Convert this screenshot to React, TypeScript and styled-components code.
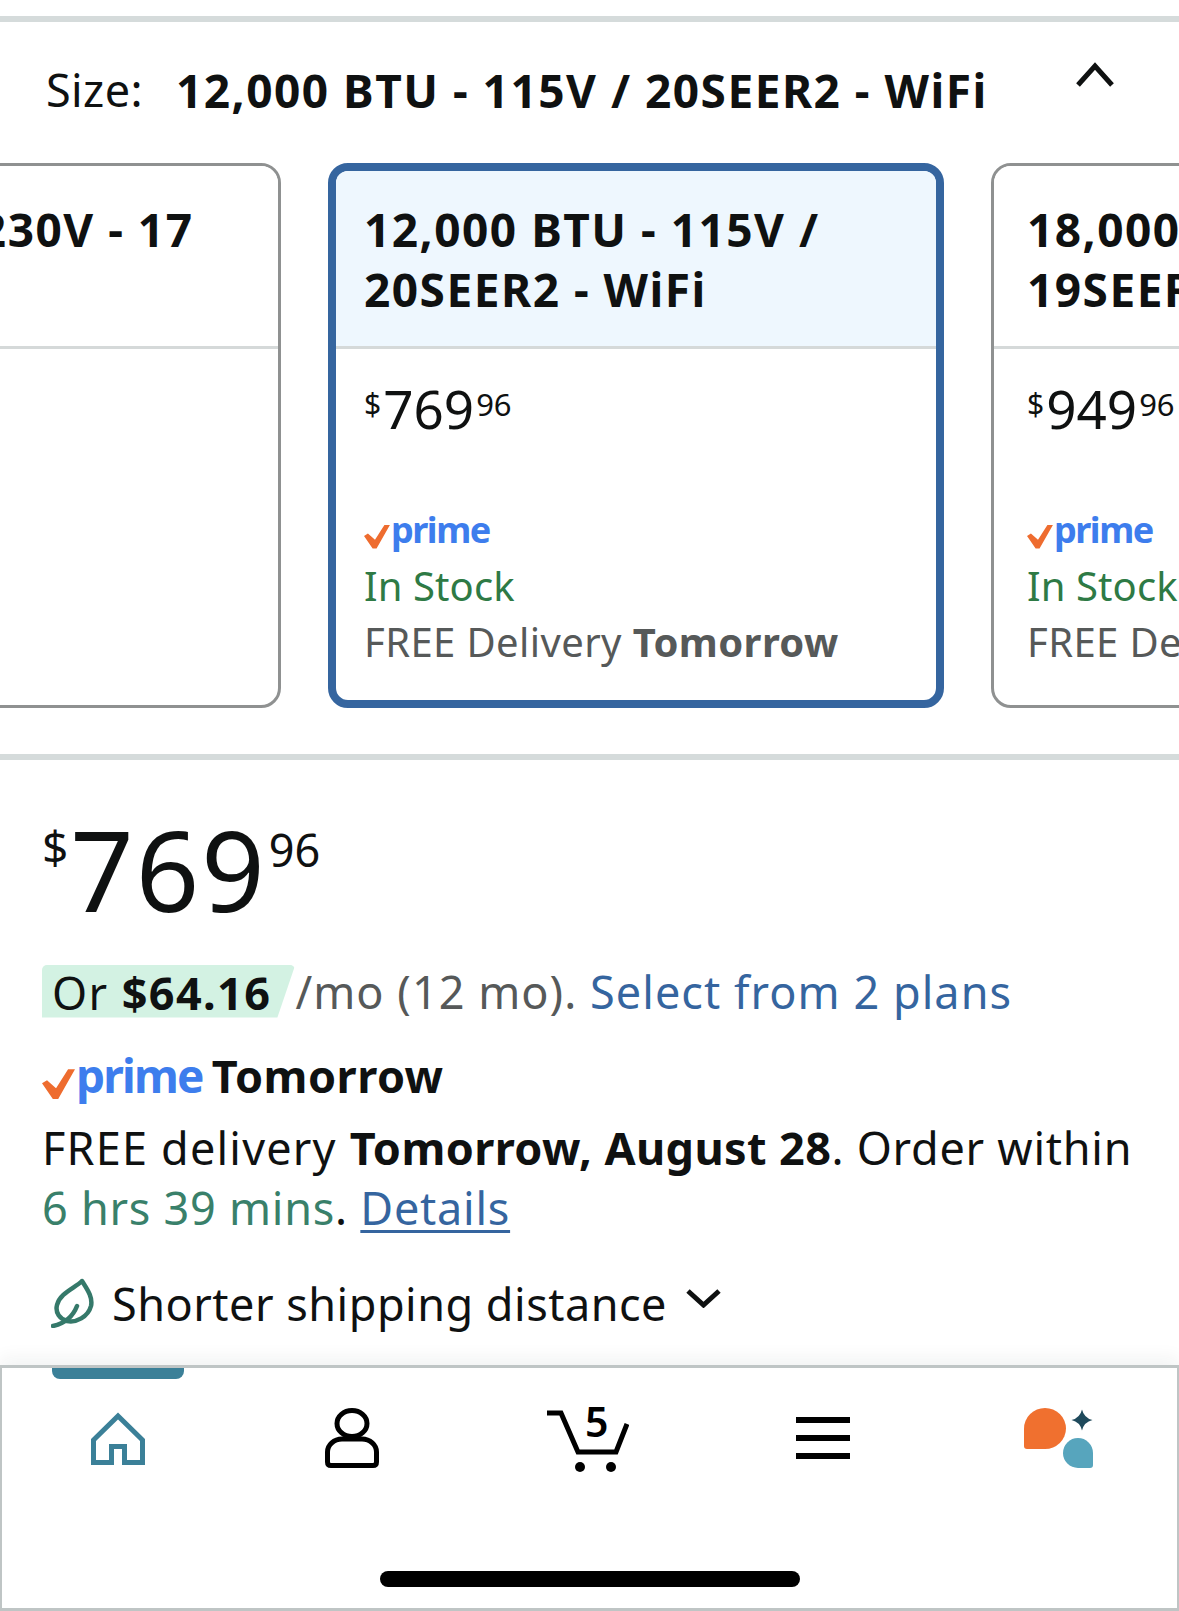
import React from "react";
import styled, { createGlobalStyle } from "styled-components";

const GlobalStyle = createGlobalStyle`
  html, body {
    margin: 0;
    padding: 0;
    background: #fff;
  }
  body {
    font-family: "Noto Sans", "Liberation Sans", sans-serif;
    color: #0f1111;
  }
  * {
    box-sizing: border-box;
  }
`;

const Page = styled.div`
  width: 1179px;
  height: 1611px;
  display: flex;
  flex-direction: column;
  overflow: hidden;
  background: #fff;
`;

const Main = styled.div`
  flex: 1;
  padding-top: 16px;
`;

const Rule = styled.div`
  height: 6px;
  background: #d5dbdb;
`;

const SizeHeader = styled.div`
  display: flex;
  align-items: flex-start;
  height: 141px;
  padding: 38px 64px 0 46px;
`;

const SizeLabel = styled.div`
  font-size: 45px;
  line-height: 60px;
  letter-spacing: 0.4px;
  margin-right: 33px;
`;

const SizeValue = styled.div`
  font-size: 46px;
  line-height: 60px;
  font-weight: 700;
  letter-spacing: 1.5px;
  white-space: nowrap;
`;

const Chevron = styled.svg`
  margin-left: auto;
  margin-top: 1px;
  flex: none;
`;

const CardRow = styled.div`
  display: flex;
  gap: 47px;
  margin-left: -335px;
  width: 2000px;
`;

const Card = styled.div<{ $selected?: boolean }>`
  width: 616px;
  height: 545px;
  flex: none;
  border-radius: 20px;
  overflow: hidden;
  border: ${(p) => (p.$selected ? "8px solid #35659f" : "3px solid #8f9191")};
`;

const CardHead = styled.div<{ $selected?: boolean }>`
  height: ${(p) => (p.$selected ? "178px" : "183px")};
  padding: ${(p) => (p.$selected ? "28px 28px 0" : "33px 33px 0")};
  background: ${(p) => (p.$selected ? "#eef7fe" : "#fff")};
  border-bottom: 3px solid #d5d9d9;
  font-size: 46px;
  line-height: 60px;
  font-weight: 700;
  letter-spacing: 1.5px;
`;

const CardBody = styled.div<{ $selected?: boolean }>`
  padding: ${(p) => (p.$selected ? "29px 28px 0" : "29px 33px 0")};
`;

const PriceSmall = styled.div`
  display: flex;
  align-items: flex-start;
  height: 62px;
`;

const Super = styled.span<{ $size: number; $line: number; $top: number }>`
  font-size: ${(p) => p.$size}px;
  line-height: ${(p) => p.$line}px;
  margin-top: ${(p) => p.$top}px;
`;

const PriceWhole = styled.span<{ $size: number; $line: number; $track: number }>`
  font-size: ${(p) => p.$size}px;
  line-height: ${(p) => p.$line}px;
  letter-spacing: ${(p) => p.$track}px;
  margin: 0 2px;
`;

const PrimeLine = styled.div`
  margin-top: 70px;
  height: 40px;
  display: flex;
  align-items: center;
`;

const PrimeMark = styled.span<{ $size: number }>`
  display: inline-flex;
  align-items: center;
  color: #3d7ded;
  font-weight: 700;
  font-size: ${(p) => p.$size}px;
  line-height: 1;
  letter-spacing: ${(p) => -p.$size * 0.04}px;
  flex: none;
`;

const CheckIcon = styled.svg<{ $shift: number }>`
  flex: none;
  margin-top: ${(p) => p.$shift}px;
  margin-right: 1px;
`;

const Stock = styled.div`
  color: #2e7a45;
  font-size: 40px;
  line-height: 56px;
  letter-spacing: 0.1px;
  margin-top: 8px;
`;

const Delivery = styled.div`
  color: #565959;
  font-size: 40px;
  line-height: 56px;
  letter-spacing: 0.4px;
  white-space: nowrap;
  b {
    font-weight: 700;
  }
`;

const SecondRule = styled(Rule)`
  margin-top: 46px;
`;

const Summary = styled.div`
  padding: 44px 42px 0;
`;

const PriceBig = styled.div`
  display: flex;
  align-items: flex-start;
  height: 130px;
`;

const PlanLine = styled.div`
  display: flex;
  align-items: center;
  margin-top: 30px;
  height: 54px;
  font-size: 45px;
  letter-spacing: 1.05px;
  white-space: nowrap;
`;

const PlanPill = styled.span`
  display: inline-block;
  height: 53px;
  line-height: 56px;
  padding: 0 24px 0 10px;
  background: #d3f2e3;
  border-radius: 5px 5px 0 0;
  clip-path: polygon(0 0, 100% 0, calc(100% - 18px) 100%, 0 100%);
  letter-spacing: 1.4px;
  b {
    font-weight: 700;
  }
`;

const PlanNote = styled.span`
  color: #565959;
`;

const LinkText = styled.span`
  color: #35659f;
`;

const PrimeRow = styled.div`
  display: flex;
  align-items: center;
  gap: 9px;
  margin-top: 27px;
  height: 60px;
`;

const RowTitle = styled.span`
  font-size: 45px;
  font-weight: 700;
  letter-spacing: 0.5px;
`;

const DeliveryCopy = styled.div`
  font-size: 45px;
  line-height: 60px;
  letter-spacing: 0.75px;
  margin-top: 13px;
  white-space: nowrap;
  b {
    font-weight: 700;
    letter-spacing: 0.4px;
  }
`;

const DeliveryLead = styled.span`
  letter-spacing: 1.2px;
`;

const Countdown = styled.span`
  color: #39806a;
`;

const DetailsLink = styled(LinkText)`
  text-decoration: underline;
  text-decoration-thickness: 3px;
  text-underline-offset: 5px;
`;

const ShippingRow = styled.div`
  display: flex;
  align-items: center;
  margin-top: 35px;
  padding-left: 9px;
  height: 60px;
  font-size: 45px;
  letter-spacing: 0.5px;
`;

const ShippingText = styled.span`
  margin: 0 18px 0 17px;
  white-space: nowrap;
`;

const MoreChevron = styled.svg`
  flex: none;
  margin-top: -10px;
`;

const TabBar = styled.nav`
  position: relative;
  height: 246px;
  flex: none;
  display: flex;
  flex-direction: column;
  background: #fff;
  border: solid #bfc5c5;
  border-width: 3px 2px 3px 2px;
  box-shadow: 0 -8px 16px rgba(15, 40, 40, 0.05);
`;

const TabRow = styled.div`
  display: grid;
  grid-template-columns: repeat(5, 1fr);
  height: 140px;
  margin: 0 1px 0 -2px;
`;

const Tab = styled.div`
  position: relative;
  display: flex;
  align-items: center;
  justify-content: center;
`;

const TabMarker = styled.span`
  position: absolute;
  top: 0;
  left: 50%;
  width: 132px;
  height: 11px;
  margin-left: -66px;
  background: #3b8098;
  border-radius: 0 0 8px 8px;
`;

const PersonIcon = styled.svg`
  margin-left: -2px;
`;

const CartWrap = styled.div`
  position: relative;
  width: 82px;
  height: 68px;
`;

const CartCount = styled.span`
  position: absolute;
  left: 38px;
  top: -8px;
  font-size: 41px;
  line-height: 50px;
  font-weight: 600;
  color: #000;
`;

const HomeBar = styled.div`
  width: 420px;
  height: 16px;
  margin: 63px auto 0;
  border-radius: 8px;
  background: #000;
`;

const PrimeLogo = ({ size }: { size: number }) => {
  const w = size * 0.72;
  return (
    <PrimeMark $size={size}>
      <CheckIcon $shift={size * 0.36} width={w} height={w * 0.95} viewBox="0 0 33 31">
        <path d="M0 15 L5 12 L14 20 L26 1 L33 1 L16 31 L11 31 Z" fill="#ee6c2f" />
      </CheckIcon>
      prime
    </PrimeMark>
  );
};

const Price = ({
  whole,
  cents,
  big,
}: {
  whole: string;
  cents: string;
  big?: boolean;
}) =>
  big ? (
    <PriceBig>
      <Super $size={46} $line={70} $top={7}>$</Super>
      <PriceWhole $size={111} $line={130} $track={2}>{whole}</PriceWhole>
      <Super $size={45} $line={70} $top={11}>{cents}</Super>
    </PriceBig>
  ) : (
    <PriceSmall>
      <Super $size={30} $line={40} $top={6}>$</Super>
      <PriceWhole $size={53} $line={62} $track={0}>{whole}</PriceWhole>
      <Super $size={31} $line={40} $top={6}>{cents}</Super>
    </PriceSmall>
  );

const OptionCard = ({
  title,
  price,
  selected,
}: {
  title: React.ReactNode;
  price?: [string, string];
  selected?: boolean;
}) => (
  <Card $selected={selected}>
    <CardHead $selected={selected}>{title}</CardHead>
    <CardBody $selected={selected}>
      {price && (
        <>
          <Price whole={price[0]} cents={price[1]} />
          <PrimeLine>
            <PrimeLogo size={36} />
          </PrimeLine>
          <Stock>In Stock</Stock>
          <Delivery>
            FREE Delivery <b>Tomorrow</b>
          </Delivery>
        </>
      )}
    </CardBody>
  </Card>
);

export default function App() {
  return (
    <Page>
      <GlobalStyle />
      <Main>
        <Rule />
        <SizeHeader>
          <SizeLabel>Size:</SizeLabel>
          <SizeValue>12,000 BTU - 115V / 20SEER2 - WiFi</SizeValue>
          <Chevron width="40" height="26" viewBox="0 0 40 26" fill="none">
            <path d="M3 24 L20 5 L37 24" stroke="#0f1111" strokeWidth="5" />
          </Chevron>
        </SizeHeader>
        <CardRow>
          <OptionCard title="9,000 BTU - 230V - 17 SEER2" />
          <OptionCard
            selected
            title={
              <>
                12,000 BTU - 115V /<br />
                20SEER2 - WiFi
              </>
            }
            price={["769", "96"]}
          />
          <OptionCard
            title={
              <>
                18,000 BTU - 230V /<br />
                19SEER2 - WiFi
              </>
            }
            price={["949", "96"]}
          />
        </CardRow>
        <SecondRule />
        <Summary>
          <Price big whole="769" cents="96" />
          <PlanLine>
            <PlanPill>
              Or <b>$64.16</b>
            </PlanPill>
            <PlanNote>/mo (12 mo).&nbsp;</PlanNote>
            <LinkText>Select from 2 plans</LinkText>
          </PlanLine>
          <PrimeRow>
            <PrimeLogo size={46} />
            <RowTitle>Tomorrow</RowTitle>
          </PrimeRow>
          <DeliveryCopy>
            <DeliveryLead>FREE delivery </DeliveryLead>
            <b>Tomorrow, August 28</b>. Order within
            <br />
            <Countdown>6 hrs 39 mins</Countdown>. <DetailsLink>Details</DetailsLink>
          </DeliveryCopy>
          <ShippingRow>
            <svg width="44" height="50" viewBox="0 0 44 50" fill="none">
              <path
                d="M31 3C24 10 9 15 6 27C4 35 9 41 16 43C25 45 37 39 40 28C42 19 36 11 31 3Z"
                stroke="#35796a"
                strokeWidth="4.5"
                strokeLinejoin="round"
              />
              <path
                d="M2 48C11 46 21 41 26 28"
                stroke="#35796a"
                strokeWidth="4.5"
                strokeLinecap="round"
              />
            </svg>
            <ShippingText>Shorter shipping distance</ShippingText>
            <MoreChevron width="37" height="20" viewBox="0 0 37 20" fill="none">
              <path d="M3 3 L18.5 17 L34 3" stroke="#0f1111" strokeWidth="5" />
            </MoreChevron>
          </ShippingRow>
        </Summary>
      </Main>
      <TabBar>
        <TabRow>
          <Tab>
            <TabMarker />
            <svg width="54" height="53" viewBox="0 0 54 53" fill="none">
              <path
                d="M2.5 50.5V28L27 4L51.5 28V50.5H33.5V34.5H20.5V50.5Z"
                stroke="#3b8098"
                strokeWidth="5"
              />
            </svg>
          </Tab>
          <Tab>
            <PersonIcon width="54" height="60" viewBox="0 0 54 60" fill="none">
              <ellipse cx="27" cy="15.5" rx="15" ry="13" stroke="#000" strokeWidth="5" />
              <path
                d="M17 31H37C45 31 51.5 37 51.5 44V54Q51.5 57.5 48 57.5H6Q2.5 57.5 2.5 54V44C2.5 37 9 31 17 31Z"
                stroke="#000"
                strokeWidth="5"
              />
            </PersonIcon>
          </Tab>
          <Tab>
            <CartWrap>
              <svg width="82" height="68" viewBox="0 0 82 68" fill="none">
                <path d="M0 9H14L31 48H69L80 20" stroke="#000" strokeWidth="5" />
                <circle cx="33" cy="63" r="5" fill="#000" />
                <circle cx="64" cy="63" r="5" fill="#000" />
              </svg>
              <CartCount>5</CartCount>
            </CartWrap>
          </Tab>
          <Tab>
            <svg width="54" height="42" viewBox="0 0 54 42" fill="#000">
              <rect width="54" height="6" />
              <rect y="18" width="54" height="6" />
              <rect y="36" width="54" height="6" />
            </svg>
          </Tab>
          <Tab>
            <svg width="69" height="60" viewBox="0 0 69 60">
              <path
                d="M21 0A21 20.5 0 0 1 21 41H3Q0 41 0 38V20.5A21 20.5 0 0 1 21 0Z"
                fill="#f0702f"
              />
              <path
                d="M54 30A15 15 0 0 1 69 45V57Q69 60 66 60H54A15 15 0 0 1 54 30Z"
                fill="#57a5bd"
              />
              <path
                d="M58 1.5Q60 10 68.5 12Q60 14 58 22.5Q56 14 47.5 12Q56 10 58 1.5Z"
                fill="#1f4a5c"
              />
            </svg>
          </Tab>
        </TabRow>
        <HomeBar />
      </TabBar>
    </Page>
  );
}
